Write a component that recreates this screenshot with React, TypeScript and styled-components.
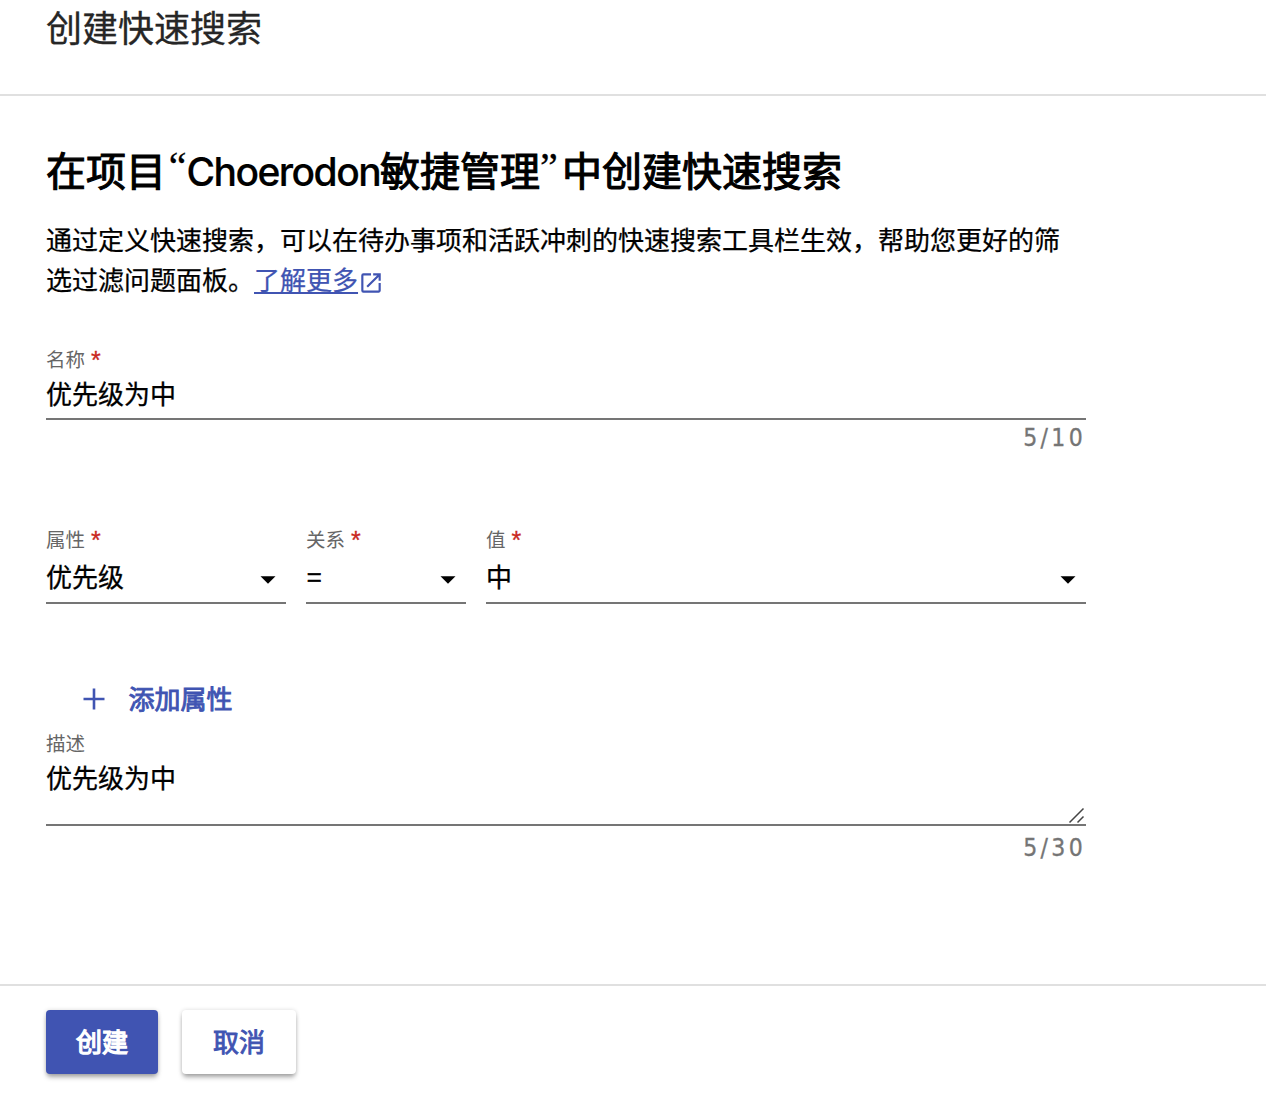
import React from 'react';
import styled, { createGlobalStyle } from 'styled-components';

const PRIMARY = '#4054b2';

const GlobalStyle = createGlobalStyle`
  *, *::before, *::after { box-sizing: border-box; }
  body {
    margin: 0;
    background: #fff;
    color: #000;
    font-family: "Noto Sans CJK SC", sans-serif;
  }
`;

const Page = styled.div`
  display: flex;
  flex-direction: column;
  width: 1266px;
  height: 1118px;
  overflow: hidden;
`;

const Header = styled.header`
  height: 96px;
  padding: 6px 46px 0;
  border-bottom: 2px solid #e0e0e0;
  font-size: 36px;
  line-height: 40px;
  color: #262626;
  -webkit-text-stroke: 0.3px #262626;
`;

const Content = styled.main`
  display: flex;
  flex-direction: column;
  width: 1132px;
  height: 888px;
  padding: 45px 46px 0;
`;

const Heading = styled.h2`
  margin: 0;
  height: 56px;
  font-size: 40px;
  line-height: 56px;
  font-weight: 400;
  white-space: nowrap;
  -webkit-text-stroke: 1.1px #000;
`;

const Latin = styled.span`
  font-family: Inter, sans-serif;
  font-weight: 500;
  font-size: 39px;
  letter-spacing: -1.55px;
  -webkit-text-stroke: 0.2px #000;
`;

const Quote = styled.span<{ $closing?: boolean }>`
  display: inline-block;
  width: ${(p) => (p.$closing ? 22 : 20.5)}px;
  font-family: "Liberation Serif", serif;
  font-size: 40px;
  line-height: 1;
  vertical-align: 6px;
  text-align: ${(p) => (p.$closing ? 'left' : 'right')};
  -webkit-text-stroke: 0.3px #000;
`;

const Intro = styled.p`
  margin: 22px 0 0;
  height: 80px;
  font-size: 26px;
  line-height: 40px;
  white-space: nowrap;
  -webkit-text-stroke: 0.25px;
`;

const Link = styled.a`
  color: ${PRIMARY};
  text-decoration: underline;
  text-decoration-thickness: 2px;
  text-underline-offset: 2px;
`;

const LinkIcon = styled.svg`
  width: 26px;
  height: 26px;
  vertical-align: -6px;
  fill: ${PRIMARY};
`;

const Field = styled.div<{ $width: number; $height: number }>`
  display: flex;
  flex-direction: column;
  width: ${(p) => p.$width}px;
  height: ${(p) => p.$height}px;
  border-bottom: 2px solid #757575;
`;

const Label = styled.label`
  height: 24px;
  font-size: 19.5px;
  line-height: 22px;
  color: #666;
`;

const Required = styled.span`
  margin-left: 6px;
  font-family: "Liberation Sans", sans-serif;
  font-size: 25px;
  line-height: 1;
  vertical-align: -5px;
  color: #c9291e;
  -webkit-text-stroke: 0.3px #c9291e;
`;

const LabelText = styled.div`
  display: flex;
  height: 22px;
`;

const Value = styled.div<{ $top: number }>`
  display: flex;
  justify-content: space-between;
  align-items: center;
  height: 36px;
  margin-top: ${(p) => p.$top}px;
  padding-right: 10px;
  font-size: 26px;
  line-height: 36px;
  -webkit-text-stroke: 0.3px #000;
`;

const Operator = styled.span`
  padding-left: 1px;
  -webkit-text-stroke: 0.6px #000;
`;

const Caret = styled.svg`
  width: 16px;
  height: 8px;
  margin-top: 7px;
`;

const Counter = styled.div<{ $top?: number }>`
  width: 1040px;
  height: 36px;
  margin-top: ${(p) => p.$top ?? 0}px;
  font-family: "DejaVu Sans Condensed", "DejaVu Sans", sans-serif;
  font-stretch: condensed;
  font-size: 24.5px;
  line-height: 36px;
  letter-spacing: 3.3px;
  text-align: right;
  color: #757575;
  -webkit-text-stroke: 0.3px #757575;
`;

const NameBlock = styled.section`
  margin-top: 49px;
`;

const FilterRow = styled.section`
  display: flex;
  gap: 20px;
  margin-top: 72px;
`;

const AddButton = styled.button`
  display: flex;
  align-items: center;
  align-self: flex-start;
  gap: 23.5px;
  height: 44px;
  margin: 73px 0 0 37px;
  padding: 0;
  border: 0;
  background: none;
  color: ${PRIMARY};
  font: 400 26px/42px "Noto Sans CJK SC", sans-serif;
  -webkit-text-stroke: 0.9px ${PRIMARY};
`;

const AddLabel = styled.span`
  padding-bottom: 2px;
`;

const PlusIcon = styled.svg`
  width: 22px;
  height: 22px;
  fill: ${PRIMARY};
`;

const Description = styled.section`
  margin-top: 11px;
`;

const TextArea = styled.div`
  display: flex;
  justify-content: space-between;
  align-items: flex-end;
  height: 68px;
`;

const TextValue = styled.span`
  align-self: flex-start;
  margin-top: 3px;
  font-size: 26px;
  line-height: 36px;
  -webkit-text-stroke: 0.3px #000;
`;

const Grip = styled.svg`
  width: 18px;
  height: 18px;
  stroke: #444;
`;

const Footer = styled.footer`
  display: flex;
  gap: 24px;
  height: 134px;
  padding: 24px 46px 0;
  border-top: 2px solid #e0e0e0;
`;

const Button = styled.button<{ $primary?: boolean }>`
  width: ${(p) => (p.$primary ? 112 : 114)}px;
  height: 64px;
  padding: 0 0 3px;
  border: 0;
  border-radius: 4px;
  background: ${(p) => (p.$primary ? PRIMARY : '#fff')};
  color: ${(p) => (p.$primary ? '#fff' : PRIMARY)};
  font: 400 26px/60px "Noto Sans CJK SC", sans-serif;
  -webkit-text-stroke: ${(p) => (p.$primary ? '1.3px #fff' : `0.9px ${PRIMARY}`)};
  box-shadow: 0 4px 5px -1px rgba(0, 0, 0, 0.34), 0 0 4px rgba(0, 0, 0, 0.14);
`;

const DropArrow = () => (
  <Caret viewBox="0 0 16 8">
    <path d="M0.5 0.3h15L8 7.8z" />
  </Caret>
);

interface FieldLabelProps {
  text: string;
  required?: boolean;
}

const FieldLabel = ({ text, required }: FieldLabelProps) => (
  <Label>
    <LabelText>
      {text}
      {required && <Required>*</Required>}
    </LabelText>
  </Label>
);

interface SelectProps {
  label: string;
  value: React.ReactNode;
  width: number;
}

const SelectField = ({ label, value, width }: SelectProps) => (
  <Field $width={width} $height={76}>
    <FieldLabel text={label} required />
    <Value $top={6}>
      <span>{value}</span>
      <DropArrow />
    </Value>
  </Field>
);

export default function App() {
  return (
    <Page>
      <GlobalStyle />
      <Header>创建快速搜索</Header>
      <Content>
        <Heading>
          在项目<Quote>“</Quote><Latin>Choerodon</Latin>敏捷管理<Quote $closing>”</Quote>中创建快速搜索
        </Heading>
        <Intro>
          通过定义快速搜索，可以在待办事项和活跃冲刺的快速搜索工具栏生效，帮助您更好的筛<br />
          选过滤问题面板。<Link>了解更多</Link>
          <LinkIcon viewBox="0 0 24 24">
            <path d="M19 19H5V5h7V3H5a2 2 0 0 0-2 2v14a2 2 0 0 0 2 2h14c1.1 0 2-.9 2-2v-7h-2v7zM14 3v2h3.59l-9.83 9.83 1.41 1.41L19 6.41V10h2V3h-7z" />
          </LinkIcon>
        </Intro>
        <NameBlock>
          <Field $width={1040} $height={72}>
            <FieldLabel text="名称" required />
            <Value $top={3}>优先级为中</Value>
          </Field>
          <Counter>5/10</Counter>
        </NameBlock>
        <FilterRow>
          <SelectField label="属性" value="优先级" width={240} />
          <SelectField label="关系" value={<Operator>=</Operator>} width={160} />
          <SelectField label="值" value="中" width={600} />
        </FilterRow>
        <AddButton>
          <PlusIcon viewBox="0 0 22 22">
            <path d="M9.7 0.5h2.6v9.2h9.2v2.6h-9.2v9.2H9.7v-9.2H0.5V9.7h9.2z" stroke="none" />
          </PlusIcon>
          <AddLabel>添加属性</AddLabel>
        </AddButton>
        <Description>
          <Field $width={1040} $height={94}>
            <FieldLabel text="描述" />
            <TextArea>
              <TextValue>优先级为中</TextValue>
              <Grip viewBox="0 0 18 18" strokeWidth="1.5">
                <path d="M1.5 16.5L15.5 2.5M9.5 16.5L15.5 10.5" />
              </Grip>
            </TextArea>
          </Field>
          <Counter $top={4}>5/30</Counter>
        </Description>
      </Content>
      <Footer>
        <Button $primary>创建</Button>
        <Button>取消</Button>
      </Footer>
    </Page>
  );
}
